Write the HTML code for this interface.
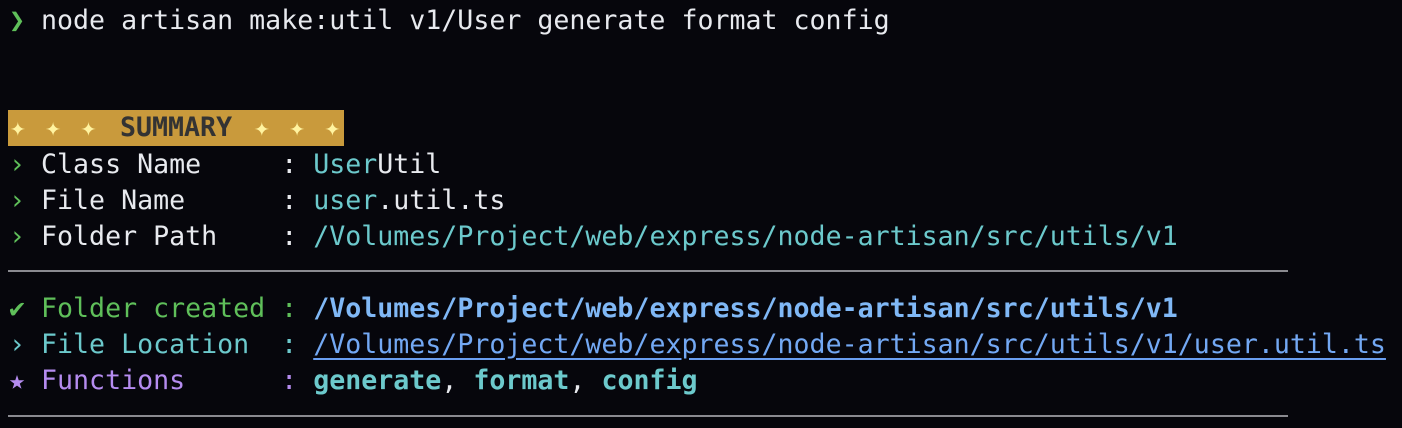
<!DOCTYPE html>
<html><head><meta charset="utf-8"><style>
html,body{margin:0;padding:0;background:#06060c;width:1402px;height:428px;overflow:hidden}
body{font-family:"DejaVu Sans Mono","Liberation Mono",monospace;font-size:26.6px;color:#e8eaef}
.r{position:absolute;left:9px;height:36px;line-height:36px;white-space:pre}
.g{color:#5fbf5a}.c{color:#6cc9cc}.b{color:#80b8f6;font-weight:bold}.p{color:#b58cf0}
.u{color:#73a8f3;text-decoration:underline;text-decoration-color:#6a9ef0;text-underline-offset:5px}
.cb{color:#6cc9cc;font-weight:bold}
.hr{position:absolute;left:8px;width:1280px;height:2px;background:#8a8a90}
.ban{position:absolute;left:8px;top:110px;width:336px;height:36px;background:#c99a3c;line-height:36px;white-space:pre}
.sp{color:#fff3a0;font-size:26px;position:absolute;top:0;letter-spacing:2px}
.sm{position:absolute;left:112px;top:0;color:#333;font-weight:bold}
</style></head><body>
<div class="r" style="top:3px"><span class="g">❯</span> node artisan make:util v1/User generate format config</div>
<div class="ban"><span class="sp" style="left:2px">✦ ✦ ✦</span><span class="sm">SUMMARY</span><span class="sp" style="left:246px">✦ ✦ ✦</span></div>
<div class="r" style="top:147px"><span class="g">›</span> Class Name     : <span class="c">User</span>Util</div>
<div class="r" style="top:183px"><span class="g">›</span> File Name      : <span class="c">user</span>.util.ts</div>
<div class="r" style="top:219px"><span class="g">›</span> Folder Path    : <span class="c">/Volumes/Project/web/express/node-artisan/src/utils/v1</span></div>
<div class="hr" style="top:270px"></div>
<div class="r g" style="top:291px">✔ Folder created : <span class="b">/Volumes/Project/web/express/node-artisan/src/utils/v1</span></div>
<div class="r c" style="top:327px">› File Location  : <span class="u">/Volumes/Project/web/express/node-artisan/src/utils/v1/user.util.ts</span></div>
<div class="r p" style="top:363px">★ Functions      : <span class="cb">generate</span><span style="color:#e8eaef">, </span><span class="cb">format</span><span style="color:#e8eaef">, </span><span class="cb">config</span></div>
<div class="hr" style="top:415px"></div>
</body></html>
